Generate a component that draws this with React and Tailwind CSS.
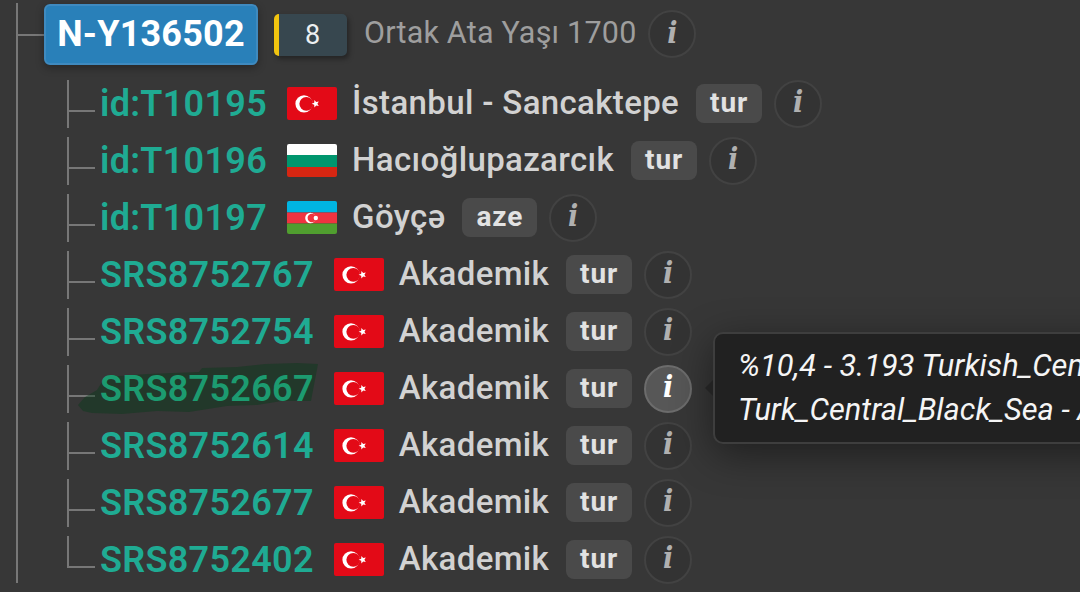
const samples = [
  { id: 'id:T10195', flag: 'tr', place: 'İstanbul - Sancaktepe', lang: 'tur' },
  { id: 'id:T10196', flag: 'bg', place: 'Hacıoğlupazarcık', lang: 'tur' },
  { id: 'id:T10197', flag: 'az', place: 'Göyçə', lang: 'aze' },
  { id: 'SRS8752767', flag: 'tr', place: 'Akademik', lang: 'tur' },
  { id: 'SRS8752754', flag: 'tr', place: 'Akademik', lang: 'tur' },
  { id: 'SRS8752667', flag: 'tr', place: 'Akademik', lang: 'tur', marked: true, open: true },
  { id: 'SRS8752614', flag: 'tr', place: 'Akademik', lang: 'tur' },
  { id: 'SRS8752677', flag: 'tr', place: 'Akademik', lang: 'tur' },
  { id: 'SRS8752402', flag: 'tr', place: 'Akademik', lang: 'tur' },
];

function Flag({ code }) {
  return (
    <svg viewBox="0 0 50 33" className="h-[33px] w-[50px] shrink-0 rounded-[2px]">
      {code === 'tr' && (
        <>
          <rect width="50" height="33" fill="#e30a17" />
          <circle cx="17" cy="16.8" r="8.6" fill="#fff" />
          <circle cx="19.3" cy="16.8" r="6.9" fill="#e30a17" />
          <path d="M24.6 16.8l2.6-1 .2-2.8 1.8 2.1 2.6-.7-1.4 2.4 1.4 2.3-2.6-.6-1.8 2.1-.2-2.8z" fill="#fff" />
        </>
      )}
      {code === 'bg' && (
        <>
          <rect width="50" height="11" fill="#fff" />
          <rect y="11" width="50" height="12" fill="#00966e" />
          <rect y="23" width="50" height="10" fill="#d62612" />
        </>
      )}
      {code === 'az' && (
        <>
          <rect width="50" height="11.5" fill="#00b5e2" />
          <rect y="11.5" width="50" height="11" fill="#ef3340" />
          <rect y="22.5" width="50" height="10.5" fill="#509e2f" />
          <circle cx="23.4" cy="17" r="5.2" fill="#fff" />
          <circle cx="24.8" cy="17" r="4.2" fill="#ef3340" />
          <circle cx="28.8" cy="17" r="2.2" fill="#fff" />
        </>
      )}
    </svg>
  );
}

function InfoButton({ active }) {
  return (
    <button
      className={
        'flex size-12 shrink-0 items-center justify-center rounded-full border-2 pb-[3px] font-["DejaVu_Serif_Condensed","DejaVu_Serif",serif] text-[30px] leading-none font-bold italic ' +
        (active ? 'border-[#6c6c6c] bg-[#575757] text-white' : 'border-[#424242] bg-[#333333] text-[#b0b0b0]')
      }
    >
      i
    </button>
  );
}

function Tooltip() {
  return (
    <div className="absolute top-[-28px] left-[713px] z-10 h-[112px] w-[480px] rounded-[10px] border-2 border-[#3e3e3e] bg-[#212121] pt-[10px] pl-[23px] text-[30.8px] leading-[44px] whitespace-nowrap text-[#f5f5f5] italic shadow-[0_10px_40px_rgba(0,0,0,0.45)]">
      <div className="absolute top-[46px] left-[-10px] border-y-8 border-r-8 border-transparent border-r-[#222222]" />
      <p>%10,4 - 3.193 Turkish_Central</p>
      <p>Turk_Central_Black_Sea - A</p>
    </div>
  );
}

function SampleRow({ sample, last }) {
  return (
    <li className="relative flex h-[57px] items-center pl-[67px]">
      {/* marker stroke behind the id */}
      {sample.marked && (
        <svg viewBox="0 0 242 52" className="absolute top-[2px] left-[77px] h-[52px] w-[242px]">
          <path
            d="M1 43L8 35L20 28L28 15L70 12L122 10L125 6L160 5L188 2L220 1L241 2L238 18L234 39L205 39L180 43L150 44L112 50L80 49L45 52L15 51L6 49Z"
            fill="#003a14"
            fillOpacity="0.38"
          />
        </svg>
      )}
      {/* branch connector */}
      <div className="flex h-12 w-[28px] shrink-0 flex-col">
        <div className="h-[32px] w-full border-b-2 border-l-2 border-[#777777]" />
        {!last && <div className="w-full flex-1 border-l-2 border-[#777777]" />}
      </div>
      <span
        className={
          'relative ml-[5px] text-[36px] font-semibold tracking-[0.3px] ' +
          (sample.marked ? 'text-[#1c9b70]' : 'text-[#1fab93]')
        }
      >
        {sample.id}
      </span>
      <div className="ml-[20px]">
        <Flag code={sample.flag} />
      </div>
      <span className="ml-[15px] pb-0.5 text-[33px] font-medium tracking-[0.35px] whitespace-nowrap text-[#d2d2d2]">{sample.place}</span>
      <span className="ml-[16.5px] flex h-[39px] items-center rounded-lg bg-[#4a4a4a] pr-[14px] pb-px pl-[14.5px] text-[28px] font-bold tracking-[0.9px] text-[#e2e2e2]">
        {sample.lang}
      </span>
      <div className="ml-[12px]">
        <InfoButton active={sample.open} />
      </div>
      {sample.open && <Tooltip />}
    </li>
  );
}

function App() {
  return (
    <div className='relative h-[592px] w-[1080px] overflow-hidden bg-[#373737] font-["Roboto",sans-serif]'>
      {/* trunk line */}
      <div className="absolute top-[3px] left-[16px] h-[580px] w-[2px] bg-[#777777]" />
      <header className="flex h-[75px] items-start pt-1 pl-[18px]">
        <div className="mt-[30px] h-[2px] w-[26px] bg-[#777777]" />
        <div className="flex h-[61px] w-[214px] items-center justify-center rounded-md border-2 border-[#3f8abf] bg-[#2980b9] pb-px text-[36px] font-bold tracking-[0.2px] text-white shadow-[0_3px_8px_rgba(0,0,0,0.3)]">
          N-Y136502
        </div>
        <div className="mt-[10px] ml-[16px] flex h-[42px] w-[73px] items-center justify-center rounded-[5px] border-l-[5px] border-[#f1c40f] bg-[#37474f] pr-px text-[27px] text-[#ecf0f1] shadow-[2px_3px_5px_rgba(0,0,0,0.35)]">
          8
        </div>
        <span className="ml-[17px] text-[30.5px] leading-[58px] tracking-[0.2px] whitespace-nowrap text-[#9e9e9e]">Ortak Ata Yaşı 1700</span>
        <div className="mt-[6px] ml-[12px]">
          <InfoButton />
        </div>
      </header>
      <ul>
        {samples.map((s, i) => (
          <SampleRow key={s.id} sample={s} last={i === samples.length - 1} />
        ))}
      </ul>
    </div>
  );
}

export default App;
